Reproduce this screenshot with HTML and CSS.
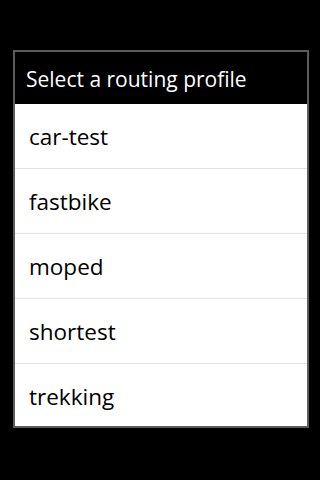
FILE: index.html
```html
<!DOCTYPE html>
<html>
<head>
<meta charset="utf-8">
<link rel="stylesheet" href="styles.css">
</head>
<body>
<div class="screen">
  <div class="dialog">
    <div class="title">Select a routing profile</div>
    <ul class="list">
      <li class="item">car-test</li>
      <li class="item">fastbike</li>
      <li class="item">moped</li>
      <li class="item">shortest</li>
      <li class="item">trekking</li>
    </ul>
  </div>
</div>
</body>
</html>
```
FILE: styles.css
```css
html, body {
  margin: 0;
  padding: 0;
  background: #000;
}
.screen {
  width: 320px;
  height: 480px;
  padding: 50px 0 0 13px;
  box-sizing: border-box;
  font-family: "Open Sans", "DejaVu Sans", sans-serif;
}
.dialog {
  width: 296px;
  height: 378px;
  box-sizing: border-box;
  border: 2px solid #5c5c5c;
  background: #fff;
  overflow: hidden;
  display: flex;
  flex-direction: column;
}
.title {
  flex: 0 0 52px;
  background: #000;
  color: #fff;
  font-size: 21px;
  display: flex;
  align-items: center;
  padding-left: 11px;
  padding-top: 2px;
  box-sizing: border-box;
}
.list {
  list-style: none;
  margin: 0;
  padding: 0;
}
.item {
  height: 65px;
  box-sizing: border-box;
  display: flex;
  align-items: center;
  padding-left: 14px;
  padding-top: 1px;
  font-size: 22.5px;
  color: #000;
  border-bottom: 1px solid #e3e3e3;
}
```
